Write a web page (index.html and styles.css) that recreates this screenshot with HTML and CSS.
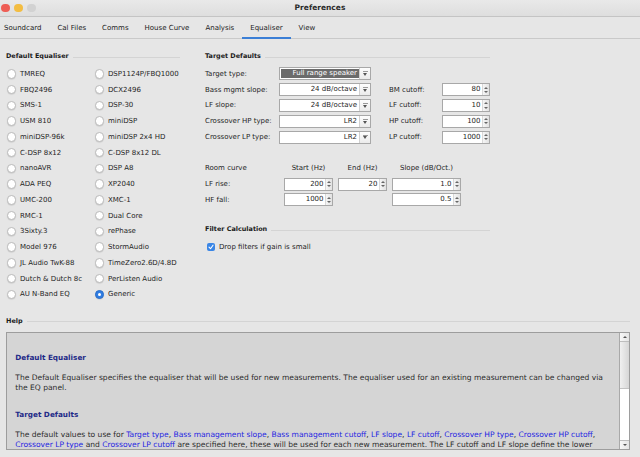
FILE: index.html
```html
<!DOCTYPE html>
<html>
<head>
<meta charset="utf-8">
<title>Preferences</title>
<link rel="stylesheet" href="styles.css">
</head>
<body>
<div class="titlebar">
  <div class="lights"><span class="light red"></span><span class="light yellow"></span><span class="light grey"></span></div>
  <div class="title">Preferences</div>
  <div></div>
</div>
<nav class="tabs">
  <span class="tab">Soundcard</span>
  <span class="tab">Cal Files</span>
  <span class="tab">Comms</span>
  <span class="tab">House Curve</span>
  <span class="tab">Analysis</span>
  <span class="tab active">Equaliser</span>
  <span class="tab">View</span>
</nav>
<main class="content">
  <div class="top">
    <section class="eq">
      <h2 class="sect">Default Equaliser</h2>
      <div class="radios">
        <div class="radio"><span class="dot"></span>TMREQ</div>
        <div class="radio"><span class="dot"></span>FBQ2496</div>
        <div class="radio"><span class="dot"></span>SMS-1</div>
        <div class="radio"><span class="dot"></span>USM 810</div>
        <div class="radio"><span class="dot"></span>miniDSP-96k</div>
        <div class="radio"><span class="dot"></span>C-DSP 8x12</div>
        <div class="radio"><span class="dot"></span>nanoAVR</div>
        <div class="radio"><span class="dot"></span>ADA PEQ</div>
        <div class="radio"><span class="dot"></span>UMC-200</div>
        <div class="radio"><span class="dot"></span>RMC-1</div>
        <div class="radio"><span class="dot"></span>3Sixty.3</div>
        <div class="radio"><span class="dot"></span>Model 976</div>
        <div class="radio"><span class="dot"></span>JL Audio TwK-88</div>
        <div class="radio"><span class="dot"></span>Dutch &amp; Dutch 8c</div>
        <div class="radio"><span class="dot"></span>AU N-Band EQ</div>
        <div class="radio"><span class="dot"></span>DSP1124P/FBQ1000</div>
        <div class="radio"><span class="dot"></span>DCX2496</div>
        <div class="radio"><span class="dot"></span>DSP-30</div>
        <div class="radio"><span class="dot"></span>miniDSP</div>
        <div class="radio"><span class="dot"></span>miniDSP 2x4 HD</div>
        <div class="radio"><span class="dot"></span>C-DSP 8x12 DL</div>
        <div class="radio"><span class="dot"></span>DSP A8</div>
        <div class="radio"><span class="dot"></span>XP2040</div>
        <div class="radio"><span class="dot"></span>XMC-1</div>
        <div class="radio"><span class="dot"></span>Dual Core</div>
        <div class="radio"><span class="dot"></span>rePhase</div>
        <div class="radio"><span class="dot"></span>StormAudio</div>
        <div class="radio"><span class="dot"></span>TimeZero2.6D/4.8D</div>
        <div class="radio"><span class="dot"></span>PerListen Audio</div>
        <div class="radio"><span class="dot on"></span>Generic</div>
      </div>
    </section>
    <section class="target">
      <h2 class="sect">Target Defaults</h2>
      <div class="tgrid">
        <span class="lbl">Target type:</span>
        <div class="combo sel"><span class="v">Full range speaker</span><span class="a"></span></div>
        <span class="lbl">Bass mgmt slope:</span>
        <div class="combo"><span class="v">24 dB/octave</span><span class="a"></span></div>
        <span class="rl">BM cutoff:</span>
        <div class="spin"><span class="v">80</span><span class="s"></span></div>
        <span class="lbl">LF slope:</span>
        <div class="combo"><span class="v">24 dB/octave</span><span class="a"></span></div>
        <span class="rl">LF cutoff:</span>
        <div class="spin"><span class="v">10</span><span class="s"></span></div>
        <span class="lbl">Crossover HP type:</span>
        <div class="combo"><span class="v">LR2</span><span class="a"></span></div>
        <span class="rl">HP cutoff:</span>
        <div class="spin"><span class="v">100</span><span class="s"></span></div>
        <span class="lbl">Crossover LP type:</span>
        <div class="combo"><span class="v">LR2</span><span class="a"></span></div>
        <span class="rl">LP cutoff:</span>
        <div class="spin"><span class="v">1000</span><span class="s"></span></div>
      </div>
      <div class="rgrid">
        <span>Room curve</span>
        <span class="h">Start (Hz)</span>
        <span class="h">End (Hz)</span>
        <span class="h">Slope (dB/Oct.)</span>
        <span>LF rise:</span>
        <div class="spin"><span class="v">200</span><span class="s"></span></div>
        <div class="spin"><span class="v">20</span><span class="s"></span></div>
        <div class="spin"><span class="v">1.0</span><span class="s"></span></div>
        <span>HF fall:</span>
        <div class="spin"><span class="v">1000</span><span class="s"></span></div>
        <div class="spin c4"><span class="v">0.5</span><span class="s"></span></div>
      </div>
      <h2 class="sect filter">Filter Calculation</h2>
      <label class="check"><span class="box"><svg width="6" height="6" viewBox="0 0 6 6"><path d="M1 3.2 L2.5 4.7 L5 1.2" fill="none" stroke="#fff" stroke-width="1.1" stroke-linecap="round" stroke-linejoin="round"/></svg></span>Drop filters if gain is small</label>
    </section>
  </div>
  <section class="help">
    <h2 class="sect">Help</h2>
    <div class="helpbox">
      <div class="helptext">
        <h3>Default Equaliser</h3>
        <p>The Default Equaliser specifies the equaliser that will be used for new measurements. The equaliser used for an existing measurement can be changed via<br>the EQ panel.</p>
        <h3>Target Defaults</h3>
        <p>The default values to use for <a>Target type</a>, <a>Bass management slope</a>, <a>Bass management cutoff</a>, <a>LF slope</a>, <a>LF cutoff</a>, <a>Crossover HP type</a>, <a>Crossover HP cutoff</a>,<br><a>Crossover LP type</a> and <a>Crossover LP cutoff</a> are specified here, these will be used for each new measurement. The LF cutoff and LF slope define the lower</p>
      </div>
      <div class="scroll">
        <span class="up"></span>
        <span class="thumb"></span>
        <span class="track"></span>
        <span class="down"></span>
      </div>
    </div>
  </section>
</main>
</body>
</html>
```
FILE: styles.css
```css
* { box-sizing: border-box; margin: 0; padding: 0; }
html, body { width: 640px; height: 457px; overflow: hidden; }
body {
  background: #e6e6e6;
  font-family: "DejaVu Sans", sans-serif;
  font-size: 7px;
  line-height: 10px;
  color: #1e1e1e;
}

/* title bar */
.titlebar {
  height: 17px;
  display: grid;
  grid-template-columns: 1fr auto 1fr;
  align-items: center;
  background: linear-gradient(#e9e9e9, #dedede);
  border-bottom: 1px solid #c4c4c4;
}
.lights { display: flex; gap: 4.5px; padding-left: 1px; }
.light { width: 8.6px; height: 8.6px; border-radius: 50%; }
.red { background: #ee5e56; }
.yellow { background: #f3bd42; }
.grey { background: #d2d2d2; }
.title { font-weight: bold; font-size: 7.5px; color: #2a2a2a; }

/* tabs */
.tabs {
  display: flex;
  height: 22px;
  margin-left: -4px;
  border-bottom: 1px solid #c9c9c9;
}
.tab {
  position: relative;
  display: flex;
  align-items: center;
  padding: 0 8px;
  color: #222;
}
.tab.active::after {
  content: "";
  position: absolute;
  left: 0; right: 0; bottom: -1px;
  height: 2px;
  background: #3b7fd6;
}

/* content */
.content { padding: 12px 0 0 6px; }
.top { display: flex; gap: 25px; }
.eq { width: 174px; }
.target { width: 285px; }

.sect {
  display: flex;
  align-items: center;
  gap: 4px;
  height: 10px;
  line-height: 10px;
  font-size: 6.45px;
  font-weight: bold;
  color: #1a1a1a;
  white-space: nowrap;
}
.sect::after {
  content: "";
  flex: 1;
  height: 1px;
  margin-top: 2px;
  background: #d4d4d4;
}

/* radios */
.radios {
  margin-top: 5px;
  display: grid;
  grid-template-columns: 88px 1fr;
  grid-template-rows: repeat(15, 15.76px);
  grid-auto-flow: column;
}
.radio { display: flex; align-items: center; gap: 3.8px; white-space: nowrap; }
.dot {
  flex: none;
  width: 9.5px;
  height: 9.5px;
  margin-left: 0.7px;
  border-radius: 50%;
  background: #fff;
  border: 0.5px solid #bcbcbc;
  box-shadow: 0 0.5px 1px rgba(0,0,0,0.15);
}
.dot.on {
  display: grid;
  place-items: center;
  background: #2f7ce2;
  border-color: #2a6fcc;
}
.dot.on::after {
  content: "";
  width: 3.4px;
  height: 3.4px;
  border-radius: 50%;
  background: #fff;
}

/* target grid */
.tgrid {
  margin-top: 5px;
  display: grid;
  grid-template-columns: 74px 92px 18px 53px 48px;
  grid-auto-rows: 15.8px;
  align-items: center;
}
.lbl { grid-column: 1; white-space: nowrap; }
.rl { grid-column: 4; white-space: nowrap; }

.combo {
  height: 13px;
  display: flex;
  background: #fff;
  border: 1px solid #a8a8a8;
}
.combo .v {
  flex: 1;
  text-align: right;
  padding-right: 2px;
  line-height: 11px;
  white-space: nowrap;
}
.combo.sel .v {
  margin: 1px 0 1px 1px;
  line-height: 9px;
  background: #6b6b6b;
  color: #fff;
}
.combo .a {
  width: 11px;
  display: grid;
  place-items: center;
  align-content: center;
  gap: 1px;
  border-left: 1px solid #d0d0d0;
  background: linear-gradient(#fdfdfd, #ebebeb);
}
.combo .a::before {
  content: "";
  width: 5px;
  height: 0.8px;
  background: #9a9a9a;
}
.combo .a::after {
  content: "";
  border-left: 2.6px solid transparent;
  border-right: 2.6px solid transparent;
  border-top: 3px solid #555;
}

.spin {
  height: 13px;
  display: flex;
  background: #fff;
  border: 1px solid #a8a8a8;
}
.spin .v {
  flex: 1;
  text-align: right;
  padding-right: 1.5px;
  line-height: 11px;
}
.spin .s {
  width: 7px;
  display: flex;
  flex-direction: column;
  justify-content: space-evenly;
  align-items: center;
  border-left: 1px solid #d8d8d8;
  background: linear-gradient(90deg, #f6f6f6, #e2e2e2);
}
.spin .s::before {
  content: "";
  border-left: 2px solid transparent;
  border-right: 2px solid transparent;
  border-bottom: 2.4px solid #666;
}
.spin .s::after {
  content: "";
  border-left: 2px solid transparent;
  border-right: 2px solid transparent;
  border-top: 2.4px solid #666;
}

/* room curve */
.rgrid {
  margin-top: 15.4px;
  display: grid;
  grid-template-columns: 74px 49px 49px 69px;
  column-gap: 5px;
  grid-auto-rows: 15.8px;
  align-items: center;
}
.rgrid .h { text-align: center; white-space: nowrap; }
.rgrid .c4 { grid-column: 4; }

.filter { margin-top: 16.5px; }
.check {
  display: flex;
  align-items: center;
  gap: 3.7px;
  height: 10px;
  margin-top: 8px;
  padding-left: 2.3px;
}
.box {
  width: 8px;
  height: 8px;
  border-radius: 2px;
  background: #3a86e6;
  display: grid;
  place-items: center;
}
.box svg { display: block; }

/* help */
.help { margin-top: 13.6px; width: 624px; }
.helpbox {
  margin-top: 5.7px;
  height: 118px;
  display: flex;
  overflow: hidden;
  background: #d5d5d5;
  border: 1px solid #9d9d9d;
}
.helptext {
  flex: 1;
  overflow: hidden;
  padding: 20.6px 0 0 8.3px;
  white-space: nowrap;
  color: #2a2a2a;
  font-size: 7.55px;
}
.helptext h3 {
  font-size: 7.25px;
  font-weight: bold;
  line-height: 10px;
  color: #1f2a88;
  margin-bottom: 10px;
}
.helptext p { line-height: 10px; margin-bottom: 17px; }
.helptext a { color: #2424e2; text-decoration: none; }

.scroll {
  width: 10px;
  display: flex;
  flex-direction: column;
  background: #fff;
  border-left: 1px solid #a9a9a9;
}
.scroll .up, .scroll .down {
  height: 9px;
  display: grid;
  place-items: center;
  background: linear-gradient(90deg, #f7f7f7, #e4e4e4);
}
.scroll .up { border-bottom: 1px solid #bdbdbd; }
.scroll .down { border-top: 1px solid #bdbdbd; height: 8.7px; }
.scroll .up::after {
  content: "";
  border-left: 2px solid transparent;
  border-right: 2px solid transparent;
  border-bottom: 2.4px solid #555;
}
.scroll .down::after {
  content: "";
  border-left: 2px solid transparent;
  border-right: 2px solid transparent;
  border-top: 2.4px solid #555;
}
.scroll .thumb {
  height: 47px;
  background: linear-gradient(90deg, #f0f0f0, #d6d6d6);
  border-bottom: 1px solid #c2c2c2;
}
.scroll .track { flex: 1; background: #fff; }
```
